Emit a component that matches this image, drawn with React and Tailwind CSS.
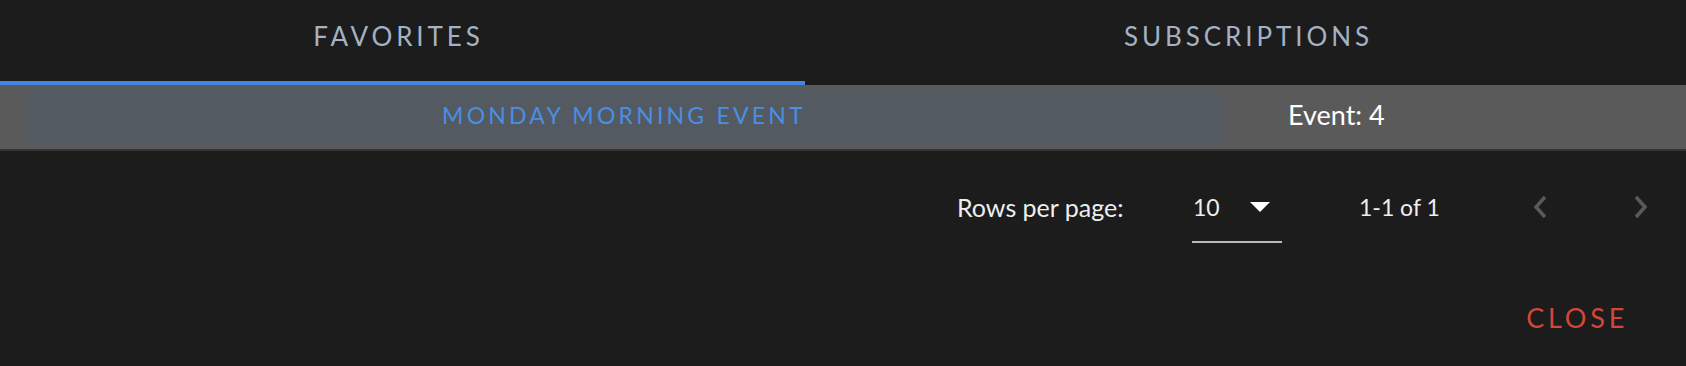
import { useState } from 'react';

const font = { fontFamily: 'Lato, "Open Sans", "Liberation Sans", sans-serif' };

function Chevron({ dir }) {
  return (
    <svg width="16" height="24" viewBox="0 0 16 24" fill="none">
      {dir === 'left' ? (
        <path d="M13 2 L4 12 L13 22" stroke="#5a5a5a" strokeWidth="3.5" />
      ) : (
        <path d="M3 2 L12 12 L3 22" stroke="#5a5a5a" strokeWidth="3.5" />
      )}
    </svg>
  );
}

export default function App() {
  const [tab, setTab] = useState('favorites');

  return (
    <div className="w-[1686px] h-[366px] bg-[#1c1c1c] text-white overflow-hidden" style={font}>
      {/* tabs */}
      <div className="flex h-[85px]">
        <button
          onClick={() => setTab('favorites')}
          className={`w-[805px] flex flex-col ${tab === 'favorites' ? 'border-b-4 border-[#4285e0]' : 'border-b-4 border-transparent'}`}
        >
          <span className="h-[73px] flex items-center justify-center pr-[8px] text-[26px] tracking-[0.15em] text-[#a3b2c4]">FAVORITES</span>
        </button>
        <button
          onClick={() => setTab('subscriptions')}
          className={`flex-1 flex flex-col ${tab === 'subscriptions' ? 'border-b-4 border-[#4285e0]' : 'border-b-4 border-transparent'}`}
        >
          <span className="h-[73px] flex items-center justify-center pl-[6px] text-[26px] tracking-[0.15em] text-[#a3b2c4]">SUBSCRIPTIONS</span>
        </button>
      </div>

      {/* row */}
      <div className="flex h-[66px] bg-[#5a5a5a] border-b-2 border-[#333333] pt-[4px] pb-[4px]">
        <div className="ml-[25px] w-[1198px] h-[56px] rounded-lg bg-[#535a61] flex items-center justify-center pb-[3px]">
          <span className="text-[23px] tracking-[0.14em] text-[#4a8ee6]">MONDAY MORNING EVENT</span>
        </div>
        <div className="flex items-center pl-[65px] pb-[3px] text-[27px] text-white">Event: 4</div>
      </div>

      {/* pagination */}
      <div className="flex justify-end items-start pr-[37px] mt-[39px] text-[23px] leading-[34px] text-[#eeeeee]">
        <span className="w-[166px] whitespace-nowrap text-[25px]">Rows per page:</span>
        <div className="ml-[69px] w-[90px] pb-[17px] border-b-2 border-[#bbbbbb] flex items-center">
          <span className="ml-[1px]">10</span>
          <svg className="ml-[30px]" width="20" height="10" viewBox="0 0 20 10">
            <path d="M0 0 L20 0 L10 10 Z" fill="#ffffff" />
          </svg>
        </div>
        <span className="ml-[77px] w-[77px] whitespace-nowrap">1-1 of 1</span>
        <div className="ml-[96px] h-[34px] flex items-center">
          <Chevron dir="left" />
        </div>
        <div className="ml-[85px] h-[34px] flex items-center">
          <Chevron dir="right" />
        </div>
      </div>

      {/* footer */}
      <div className="flex justify-end pr-[58px] mt-[58px]">
        <button className="text-[27px] leading-[34px] tracking-[0.14em] text-[#d4453a]">CLOSE</button>
      </div>
    </div>
  );
}
